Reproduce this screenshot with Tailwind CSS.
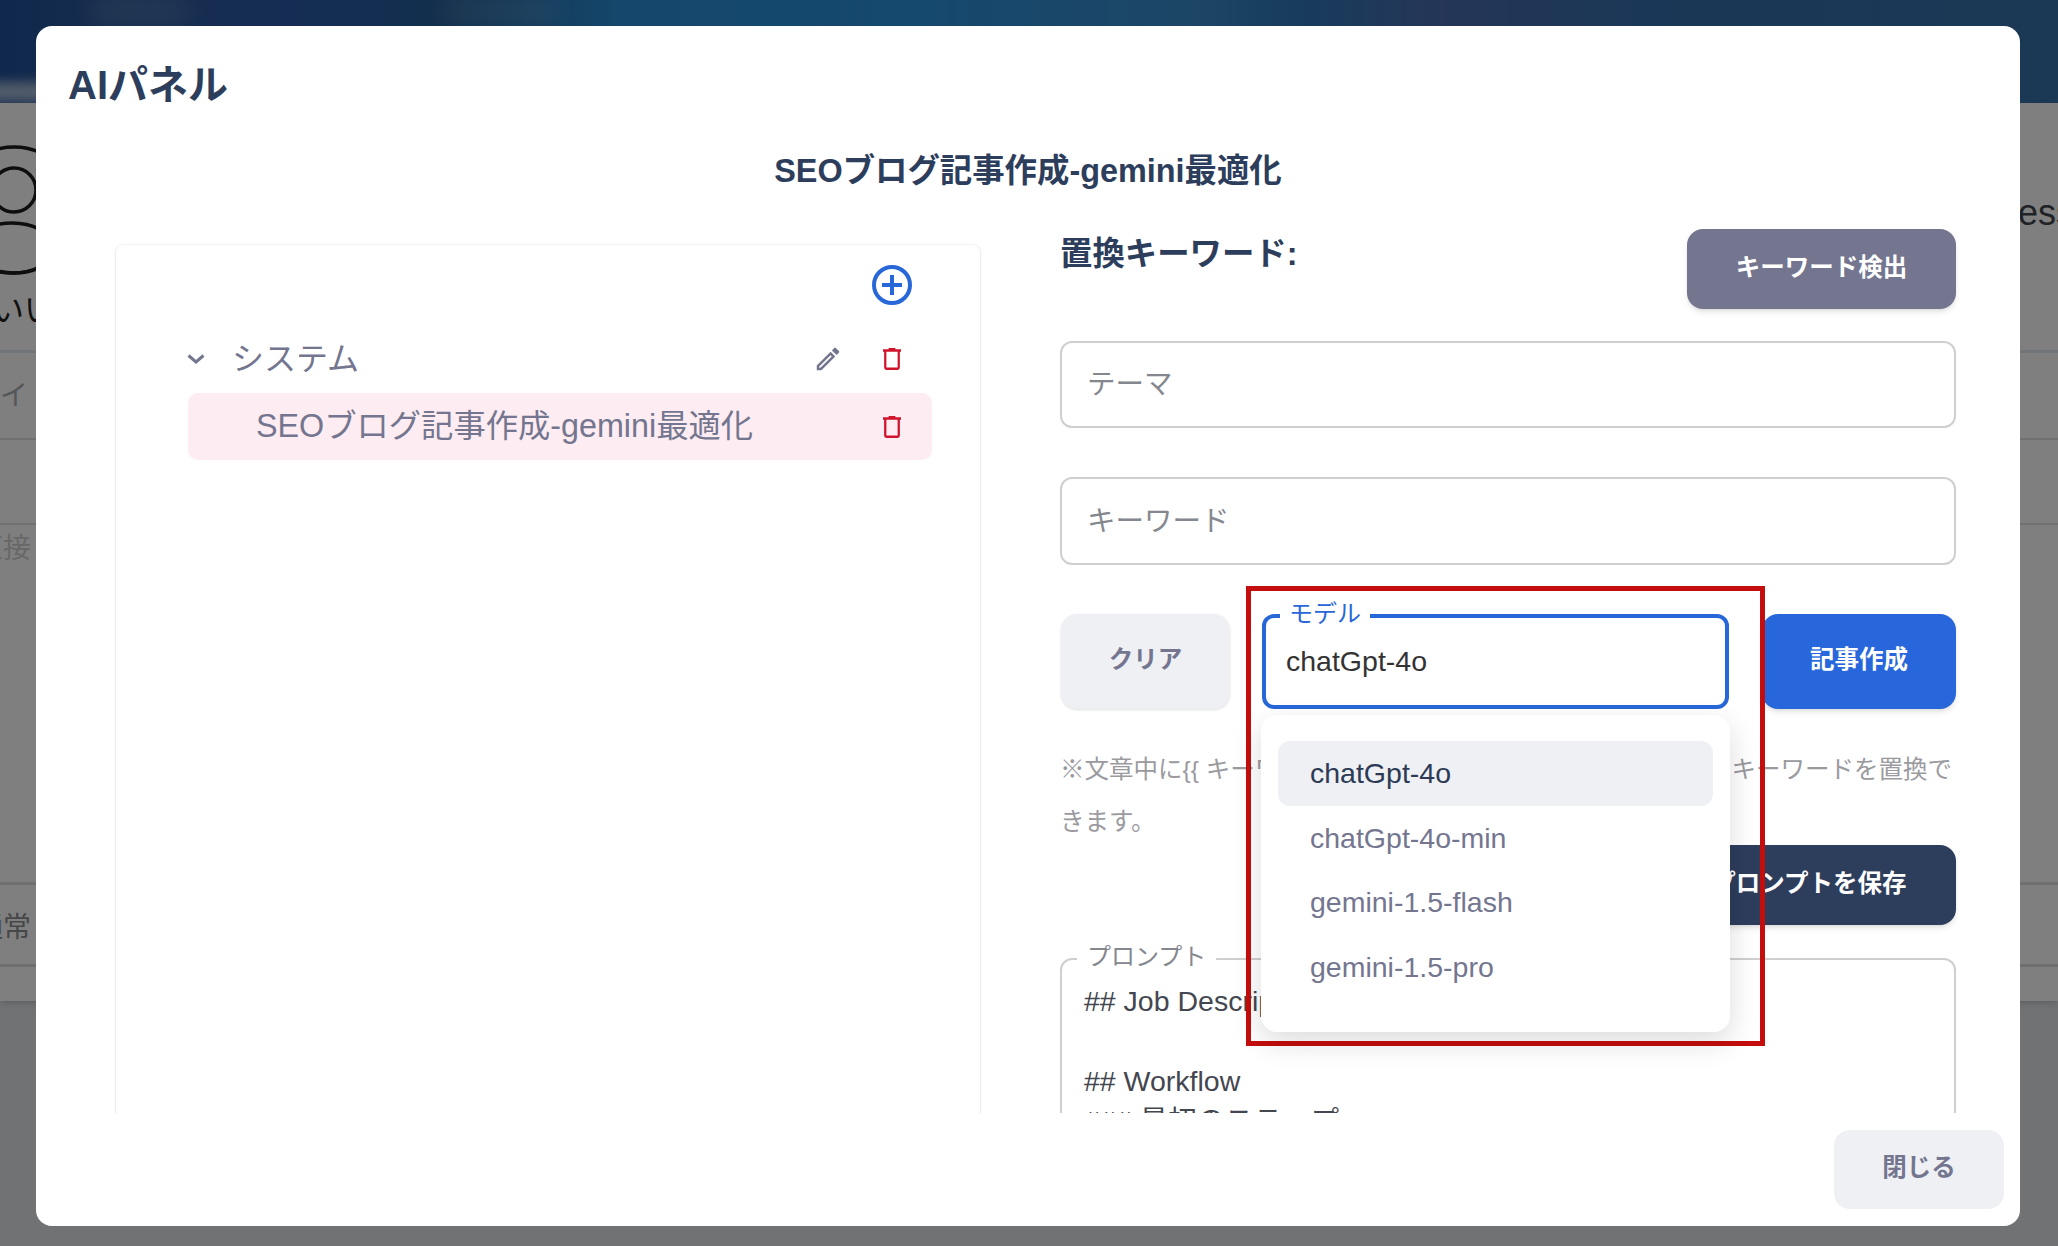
<!DOCTYPE html>
<html lang="ja">
<head>
    <meta charset="UTF-8">
    <title>AIパネル</title>
    <script src="https://cdn.jsdelivr.net/npm/@tailwindcss/browser@4"></script>
</head>
<body class="bg-[#e2e4e6] font-['Liberation_Sans','Noto_Sans_CJK_JP',sans-serif] overflow-hidden">
    <div class="relative w-[2058px] h-[1246px] overflow-hidden">

        <!-- Page behind the modal -->
        <div class="bg-white shadow-md overflow-hidden">
            <div class="relative h-[103px] overflow-hidden bg-[linear-gradient(90deg,#1e5098_0%,#2e5c9c_6%,#2a5aa8_14%,#245f9a_22%,#2a8fd8_30%,#2c92dc_45%,#3a8ccc_58%,#2f78b8_63%,#4a6cb0_70%,#366fae_80%,#3670aa_100%)]">
                <div class="absolute left-[-20px] top-[82px] w-[80px] h-[20px] rounded-full bg-white/60 blur-[6px]"></div>
                <div class="absolute left-[90px] top-[-6px] w-[100px] h-[34px] rounded-full bg-white/10 blur-[10px]"></div>
                <div class="absolute left-[440px] top-[-6px] w-[120px] h-[34px] rounded-full bg-white/10 blur-[10px]"></div>
            </div>

            <div class="flex justify-between h-[250px] border-b-[3px] border-[#e4eaee]">
                <div>
                    <svg class="mt-[40px]" width="40" height="135" viewBox="0 0 40 135" fill="none" stroke="#1c1c1c" stroke-width="3.5">
                        <circle cx="14" cy="67" r="63"/>
                        <circle cx="14" cy="47" r="22"/>
                        <ellipse cx="12" cy="105" rx="42" ry="25"/>
                    </svg>
                    <div class="ml-[-8px] mt-[12px] text-[32px] leading-[40px] text-[#222] whitespace-nowrap">いい</div>
                </div>
                <div class="mt-[86px] mr-[-16px] text-[36px] leading-[48px] text-[#40444c]">ess</div>
            </div>

            <div class="flex items-center h-[87px] border-b-[2px] border-[#dfe3e6] text-[28px] text-[#a8acb0]">イ</div>
            <div class="h-[85px] border-b-[2px] border-[#dfe3e6]"></div>

            <div class="h-[360px] pt-[6px] border-b-[3px] border-[#e0e0e0]">
                <div class="ml-[-25px] text-[28px] leading-[36px] text-[#d0d0d0] whitespace-nowrap">直接</div>
            </div>
            <div class="flex items-center h-[82px] border-b-[3px] border-[#dcdcdc] pt-[6px]">
                <div class="ml-[-25px] text-[28px] text-[#8c8e92] whitespace-nowrap">通常</div>
            </div>
            <div class="h-[34px]"></div>
        </div>

        <!-- Dim layer -->
        <div class="absolute inset-0 bg-black/50"></div>

        <!-- Modal -->
        <div class="absolute left-[36px] top-[26px] w-[1984px] h-[1200px] bg-white rounded-[16px] flex flex-col">
            <h1 class="pl-[32px] pt-[37px] text-[40px] leading-[44px] font-bold text-[#2d3d5c]">AIパネル</h1>

            <div class="flex-1 overflow-hidden">
                <h2 class="mt-[42px] text-center text-[32.4px] leading-[44px] font-bold text-[#2d3d5c]">SEOブログ記事作成-gemini最適化</h2>

                <div class="flex pl-[79px] pr-[64px] mt-[36px] gap-[79px]">
                    <!-- Prompt tree -->
                    <div class="w-[866px] h-[1000px] mt-[15px] shrink-0 rounded-t-lg border border-[#ececef] border-t-[#f4f4f6] shadow-[0_0_3px_rgba(0,0,0,0.03)]">
                        <div class="flex justify-end pt-[20px] pr-[68px]">
                            <svg width="40" height="40" viewBox="0 0 40 40" fill="none" stroke="#2767d8" stroke-width="4">
                                <circle cx="20" cy="20" r="18"/>
                                <path d="M20 10V30M10 20H30"/>
                            </svg>
                        </div>
                        <div class="ml-[72px] mr-[48px] mt-[20px]">
                            <div class="flex items-center h-[68px] text-[32px] text-[#74768f]">
                                <svg class="shrink-0 -ml-[1px]" width="18" height="10" viewBox="0 0 18 10" fill="none" stroke="#74768f" stroke-width="3"><path d="M1.5 1.5L9 8L16.5 1.5"/></svg>
                                <span class="ml-[27px]">システム</span>
                                <svg class="ml-auto mr-[40px]" width="30" height="30" viewBox="0 0 24 24" fill="#74768f"><path d="M14.06,9L15,9.94L5.92,19H5V18.08L14.06,9M17.66,3C17.41,3 17.15,3.1 16.96,3.29L15.13,5.12L18.88,8.87L20.71,7.04C21.1,6.65 21.1,6 20.71,5.63L18.37,3.29C18.17,3.09 17.92,3 17.66,3M14.06,6.19L3,17.25V21H6.75L17.81,9.94L14.06,6.19Z"/></svg>
                                <svg class="mr-[31px]" width="18" height="22" viewBox="4 3 16 18" preserveAspectRatio="none" fill="#d0142c"><path d="M9,3V4H4V6H5V19A2,2 0 0,0 7,21H17A2,2 0 0,0 19,19V6H20V4H15V3H9M7,6H17V19H7V6Z"/></svg>
                            </div>
                            <div class="flex items-center h-[67px] pl-[68px] rounded-[10px] bg-[#fdecf1] text-[32.3px] text-[#74768f]">
                                <span>SEOブログ記事作成-gemini最適化</span>
                                <svg class="ml-auto mr-[31px]" width="18" height="22" viewBox="4 3 16 18" preserveAspectRatio="none" fill="#d0142c"><path d="M9,3V4H4V6H5V19A2,2 0 0,0 7,21H17A2,2 0 0,0 19,19V6H20V4H15V3H9M7,6H17V19H7V6Z"/></svg>
                            </div>
                        </div>
                    </div>

                    <!-- Form -->
                    <div class="w-[896px] shrink-0">
                        <div class="flex justify-between">
                            <h3 class="text-[32.4px] leading-[50px] font-bold text-[#2d3d5c]">置換キーワード:</h3>
                            <button class="w-[269px] h-[80px] pb-[2px] rounded-[16px] bg-[#74768f] text-white text-[24.5px] font-bold shadow-md">キーワード検出</button>
                        </div>

                        <div class="mt-[32px] h-[87px] flex items-center px-[25px] border-[2px] border-[#cfcfcf] rounded-[12px] text-[28.5px] text-[#85878f]">テーマ</div>
                        <div class="mt-[49px] h-[88px] flex items-center px-[25px] border-[2px] border-[#cfcfcf] rounded-[12px] text-[28.5px] text-[#85878f]">キーワード</div>

                        <div class="mt-[49px] flex h-[95px]">
                            <button class="ml-[1px] w-[169px] pb-[2px] rounded-[16px] bg-[#eef0f4] text-[#74768f] text-[24.5px] font-bold shadow-sm">クリア</button>

                            <div class="relative z-10 ml-[32px] w-[467px]">
                                <div class="h-full flex items-center pl-[20px] border-[4px] border-[#2767d8] rounded-[12px] text-[28.5px] text-[#333]">chatGpt-4o</div>
                                <span class="absolute left-[18px] top-[-14px] px-[9px] bg-white text-[24px] leading-[28px] text-[#2767d8]">モデル</span>

                                <!-- Model menu -->
                                <ul class="absolute left-[-1px] top-[101px] w-[469px] h-[317px] pt-[26px] px-[17px] bg-white rounded-[16px] shadow-[0_10px_30px_rgba(0,0,0,0.14)] text-[28.5px] text-[#74768f]">
                                    <li class="flex items-center h-[64.7px] pl-[32px] rounded-[12px] bg-[#eef0f4] text-[#2d3a55]">chatGpt-4o</li>
                                    <li class="flex items-center h-[64.7px] pl-[32px]">chatGpt-4o-min</li>
                                    <li class="flex items-center h-[64.7px] pl-[32px]">gemini-1.5-flash</li>
                                    <li class="flex items-center h-[64.7px] pl-[32px]">gemini-1.5-pro</li>
                                </ul>
                            </div>

                            <button class="ml-[33px] w-[194px] pb-[2px] rounded-[16px] bg-[#2767db] text-white text-[24.5px] font-bold shadow-md">記事作成</button>
                        </div>

                        <p class="mt-[35px] mb-[-3px] text-[24.5px] leading-[52px] text-[#9a9a9f]">※文章中に{{ キーワード }}&nbsp;&nbsp;の形式で記述すると、指定されたキーワードを置換できます。</p>

                        <div class="flex justify-end">
                            <button class="w-[294px] h-[80px] pb-[2px] rounded-[16px] bg-[#2d3d5c] text-white text-[24.5px] font-bold shadow-md">プロンプトを保存</button>
                        </div>

                        <div class="relative mt-[33px] h-[400px] border-[2px] border-[#cfcfcf] rounded-[12px] pt-[21px] pl-[22px] text-[28.5px] leading-[40px] text-[#44474f]">
                            <span class="absolute left-[15px] top-[-17px] px-[10px] bg-white text-[24px] leading-[28px] text-[#85878f]">プロンプト</span>
                            <p>## Job Description</p>
                            <p class="mt-[40px]">## Workflow</p>
                            <p>### 最初のステップ</p>
                        </div>
                    </div>
                </div>
            </div>

            <div class="flex justify-end h-[113px] pt-[17px] pr-[16px]">
                <button class="w-[170px] h-[79px] pb-[2px] rounded-[16px] bg-[#eef0f4] text-[#74768f] text-[24.5px] font-bold">閉じる</button>
            </div>
        </div>

        <!-- Red annotation box -->
        <div class="absolute left-[1246px] top-[586px] w-[519px] h-[460px] border-[5px] border-[#c40d0d] pointer-events-none"></div>
    </div>
</body>
</html>
